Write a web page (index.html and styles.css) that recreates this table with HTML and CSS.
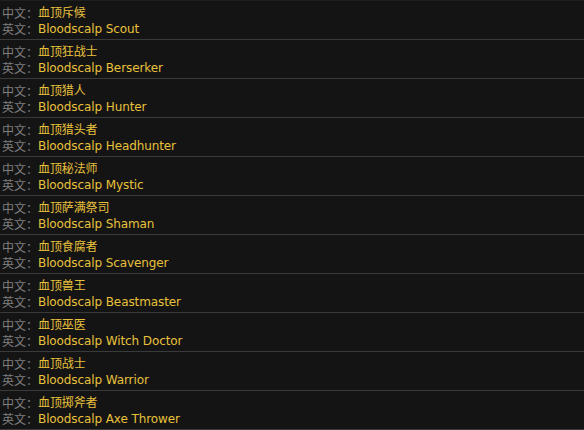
FILE: index.html
```html
<!DOCTYPE html>
<html lang="zh">
<head>
<meta charset="utf-8">
<link rel="stylesheet" href="styles.css">
</head>
<body>
<div class="list">
  <div class="row"><div class="line"><span class="lbl">中文：</span><span class="val">血顶斥候</span></div><div class="line"><span class="lbl">英文：</span><span class="val">Bloodscalp Scout</span></div></div>
  <div class="row"><div class="line"><span class="lbl">中文：</span><span class="val">血顶狂战士</span></div><div class="line"><span class="lbl">英文：</span><span class="val">Bloodscalp Berserker</span></div></div>
  <div class="row"><div class="line"><span class="lbl">中文：</span><span class="val">血顶猎人</span></div><div class="line"><span class="lbl">英文：</span><span class="val">Bloodscalp Hunter</span></div></div>
  <div class="row"><div class="line"><span class="lbl">中文：</span><span class="val">血顶猎头者</span></div><div class="line"><span class="lbl">英文：</span><span class="val">Bloodscalp Headhunter</span></div></div>
  <div class="row"><div class="line"><span class="lbl">中文：</span><span class="val">血顶秘法师</span></div><div class="line"><span class="lbl">英文：</span><span class="val">Bloodscalp Mystic</span></div></div>
  <div class="row"><div class="line"><span class="lbl">中文：</span><span class="val">血顶萨满祭司</span></div><div class="line"><span class="lbl">英文：</span><span class="val">Bloodscalp Shaman</span></div></div>
  <div class="row"><div class="line"><span class="lbl">中文：</span><span class="val">血顶食腐者</span></div><div class="line"><span class="lbl">英文：</span><span class="val">Bloodscalp Scavenger</span></div></div>
  <div class="row"><div class="line"><span class="lbl">中文：</span><span class="val">血顶兽王</span></div><div class="line"><span class="lbl">英文：</span><span class="val">Bloodscalp Beastmaster</span></div></div>
  <div class="row"><div class="line"><span class="lbl">中文：</span><span class="val">血顶巫医</span></div><div class="line"><span class="lbl">英文：</span><span class="val">Bloodscalp Witch Doctor</span></div></div>
  <div class="row"><div class="line"><span class="lbl">中文：</span><span class="val">血顶战士</span></div><div class="line"><span class="lbl">英文：</span><span class="val">Bloodscalp Warrior</span></div></div>
  <div class="row"><div class="line"><span class="lbl">中文：</span><span class="val">血顶掷斧者</span></div><div class="line"><span class="lbl">英文：</span><span class="val">Bloodscalp Axe Thrower</span></div></div>
</div>
</body>
</html>
```
FILE: styles.css
```css
html, body {
  margin: 0;
  padding: 0;
  background: #141414;
}
body {
  font-family: "DejaVu Sans", "Noto Sans CJK SC", sans-serif;
  font-size: 12px;
}
.list {
  display: flex;
  flex-direction: column;
  border-top: 1px solid #1e1e1e;
}
.row {
  display: flex;
  flex-direction: column;
  padding: 4px 0 1px 2px;
  height: 33px;
  border-bottom: 1px solid #3a3a3a;
}
.line {
  display: flex;
  line-height: 16px;
  height: 16px;
  white-space: nowrap;
}
.lbl {
  color: #7f7f7f;
  font-family: "Noto Sans CJK SC", sans-serif;
  width: 36px;
}
.val {
  color: #e8c13c;
  letter-spacing: -0.1px;
}
```
